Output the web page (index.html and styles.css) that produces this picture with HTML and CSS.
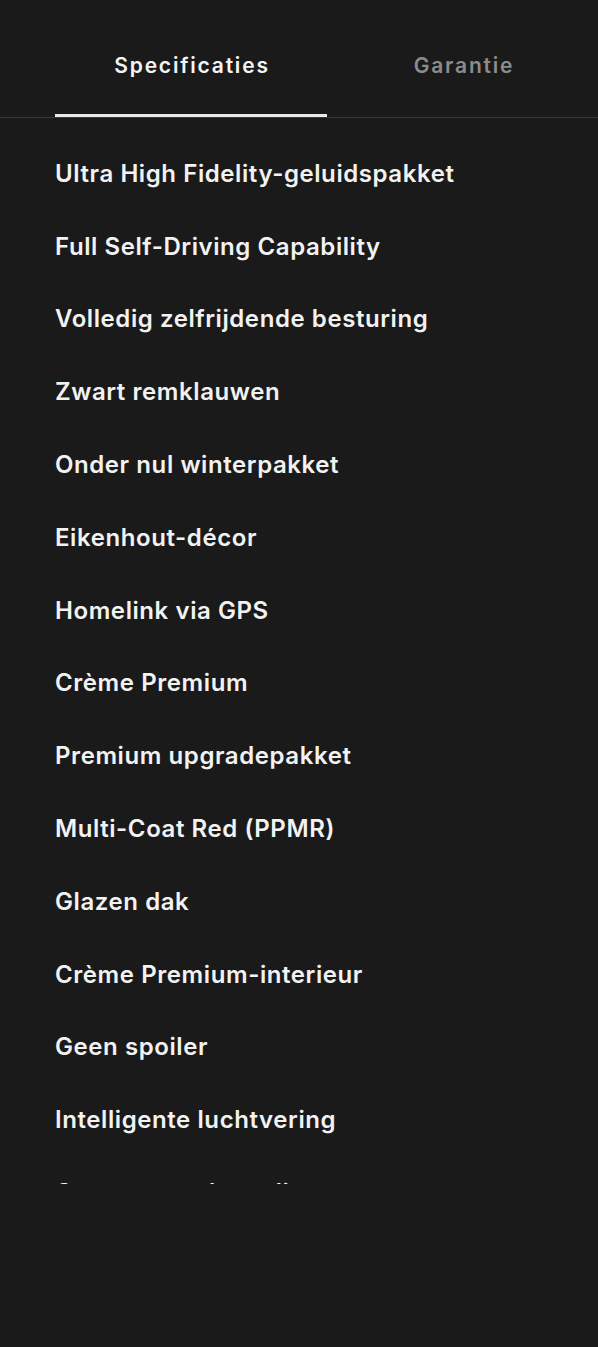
FILE: index.html
```html
<!DOCTYPE html>
<html lang="nl">
<head>
<meta charset="utf-8">
<title>Specificaties</title>
<link rel="stylesheet" href="styles.css">
</head>
<body>
<div class="page">
  <nav class="tabs">
    <div class="tab tab-active">Specificaties</div>
    <div class="tab">Garantie</div>
  </nav>
  <div class="list-viewport">
    <ul class="spec-list">
      <li class="spec-item">Ultra High Fidelity-geluidspakket</li>
      <li class="spec-item">Full Self-Driving Capability</li>
      <li class="spec-item">Volledig zelfrijdende besturing</li>
      <li class="spec-item">Zwart remklauwen</li>
      <li class="spec-item">Onder nul winterpakket</li>
      <li class="spec-item">Eikenhout-décor</li>
      <li class="spec-item">Homelink via GPS</li>
      <li class="spec-item">Crème Premium</li>
      <li class="spec-item">Premium upgradepakket</li>
      <li class="spec-item">Multi-Coat Red (PPMR)</li>
      <li class="spec-item">Glazen dak</li>
      <li class="spec-item">Crème Premium-interieur</li>
      <li class="spec-item">Geen spoiler</li>
      <li class="spec-item">Intelligente luchtvering</li>
      <li class="spec-item">Geavanceerde audiosysteem</li>
    </ul>
  </div>
</div>
</body>
</html>
```

FILE: styles.css
```css
html, body {
  margin: 0;
  padding: 0;
  background: #1a1a1a;
}
body {
  font-family: Inter, "Noto Sans", "Liberation Sans", sans-serif;
  color: #f2f2f2;
}
.page {
  width: 598px;
  min-height: 1347px;
  background: #1a1a1a;
}
.tabs {
  display: flex;
  padding-left: 55px;
  height: 117px;
  border-bottom: 1px solid #383838;
}
.tab {
  position: relative;
  width: 272px;
  height: 117px;
  flex: none;
  display: flex;
  align-items: center;
  justify-content: center;
  box-sizing: border-box;
  padding: 13px 0 0 2px;
  font-size: 21px;
  font-weight: 600;
  letter-spacing: 1.8px;
  color: #8c8c8c;
}
.tab-active {
  color: #f4f4f4;
}
.tab-active::after {
  content: "";
  position: absolute;
  left: 0;
  right: 0;
  bottom: 0;
  height: 3px;
  background: #e8e8e8;
}
.list-viewport {
  height: 1066px;
  overflow: hidden;
}
.spec-list {
  list-style: none;
  margin: 0;
  padding: 19px 0 0 55px;
}
.spec-item {
  height: 72.8px;
  display: flex;
  align-items: center;
  font-size: 24px;
  font-weight: 600;
  letter-spacing: 0.58px;
  color: #f2f2f2;
  white-space: nowrap;
}
```
